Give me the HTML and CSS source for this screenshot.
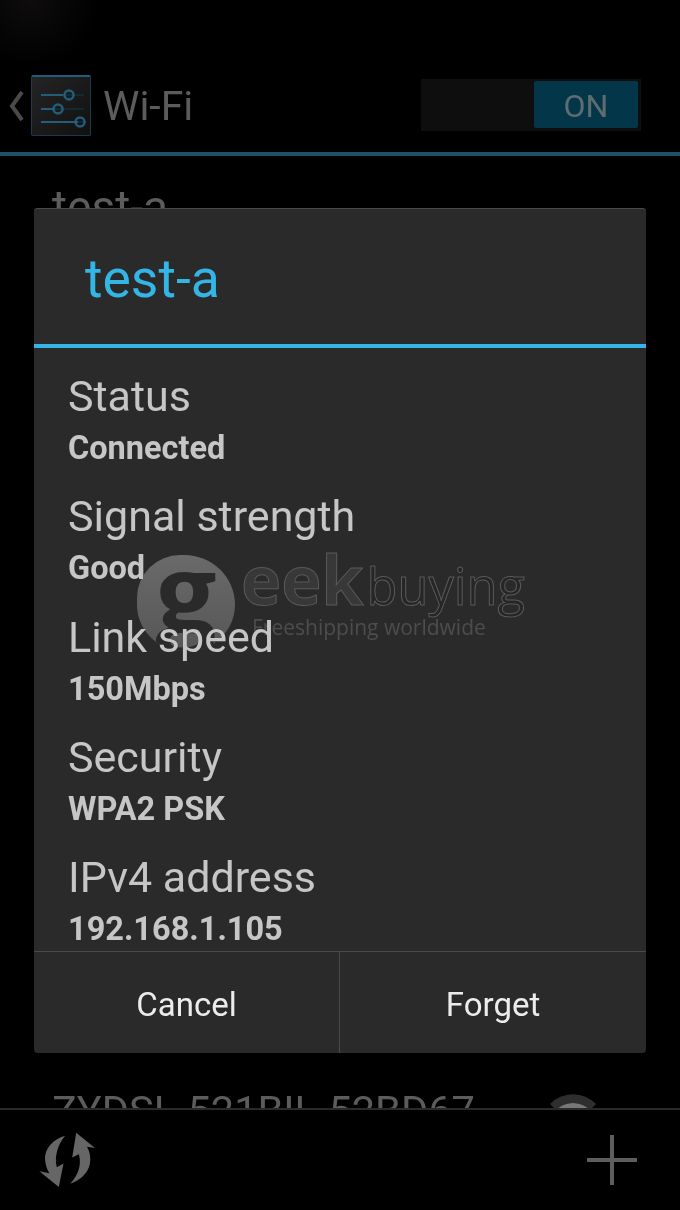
FILE: index.html
```html
<!DOCTYPE html>
<html lang="en">
  <head>
    <meta charset="UTF-8" />
    <meta name="viewport" content="width=device-width, initial-scale=1.0" />
    <title>Wi-Fi</title>
    <link rel="stylesheet" href="styles.css">
  </head>
  <body>
    <div class="screen">
      <div class="status-bar"></div>

      <div class="action-bar">
        <svg class="back-icon" viewBox="0 0 16 30" width="16" height="30">
          <path d="M14 1 L4 15 L14 29" fill="none" stroke="#4a4a4a" stroke-width="4" />
        </svg>
        <div class="settings-icon">
          <svg viewBox="0 0 58 58" width="58" height="58">
            <g fill="none" stroke="#235d7a">
              <path d="M9 18 H52 M9 32 H52 M9 45 H52" stroke="#12303f" stroke-width="1.5" />
              <path d="M9 18 H31 M9 32 H23 M9 45 H46" stroke-width="2" />
              <circle cx="37" cy="18" r="4.5" stroke-width="2.5" />
              <circle cx="26" cy="32" r="4.5" stroke-width="2.5" />
              <circle cx="48" cy="45" r="4.5" stroke-width="2.5" />
            </g>
          </svg>
        </div>
        <span class="action-title">Wi-Fi</span>
        <div class="switch">
          <div class="switch-thumb">ON</div>
        </div>
      </div>

      <div class="network-list">
        <div class="network-row">test-a</div>
        <div class="network-row last">
          <span>ZYDSL-521BIL-52BD67</span>
          <svg class="wifi-icon" viewBox="0 0 50 30" width="50" height="30">
            <path d="M2 14 A32 32 0 0 1 48 14 L42 20 A24 24 0 0 0 8 20 Z" fill="#2e2e2e" />
            <path d="M8 20 A24 24 0 0 1 42 20 L25 40 Z" fill="#777" />
          </svg>
        </div>
      </div>

      <div class="bottom-bar">
        <svg class="refresh-icon" viewBox="110 265 185 185" width="62" height="62">
          <path d="M197 285 C160 295 135 325 137 355 C138 372 143 385 150 397 L120 391 L178 438 L192 368 L172 379 C165 350 172 315 197 285 Z" fill="#666" />
          <path d="M212 428 C248 415 272 390 272 355 C272 340 268 328 262 318 L286 322 L230 276 L218 350 L238 340 C246 370 238 400 212 428 Z" fill="#666" />
        </svg>
        <svg class="add-icon" viewBox="0 0 50 50" width="50" height="50">
          <path d="M25 0 V50 M0 25 H50" stroke="#5e5e5e" stroke-width="4" />
        </svg>
      </div>

      <div class="dialog">
        <div class="dialog-title">test-a</div>
        <div class="dialog-body">
          <div class="info-row">
            <div class="info-label">Status</div>
            <div class="info-value">Connected</div>
          </div>
          <div class="info-row">
            <div class="info-label">Signal strength</div>
            <div class="info-value">Good</div>
          </div>
          <div class="info-row">
            <div class="info-label">Link speed</div>
            <div class="info-value">150Mbps</div>
          </div>
          <div class="info-row">
            <div class="info-label">Security</div>
            <div class="info-value">WPA2 PSK</div>
          </div>
          <div class="info-row">
            <div class="info-label">IPv4 address</div>
            <div class="info-value">192.168.1.105</div>
          </div>
        </div>
        <div class="dialog-buttons">
          <div class="dialog-button">Cancel</div>
          <div class="dialog-button">Forget</div>
        </div>
      </div>

      <div class="watermark">
        <div class="wm-badge"><span>g</span></div>
        <div class="wm-name"><b>eek</b><span>buying</span></div>
        <div class="wm-tagline">Freeshipping worldwide</div>
      </div>
    </div>
  </body>
</html>
```

FILE: styles.css
```css
body {
    margin: 0;
    background: #000;
    font-family: Roboto, sans-serif;
}

.screen {
    position: relative;
    display: flex;
    flex-direction: column;
    width: 680px;
    height: 1210px;
    overflow: hidden;
    background: #000;
}

.status-bar {
    height: 60px;
    flex-shrink: 0;
    background: radial-gradient(circle at 30px 0, #0e0c0c, #000 70px);
}

/* action bar */
.action-bar {
    display: flex;
    align-items: center;
    height: 92px;
    flex-shrink: 0;
    padding-left: 8px;
    padding-right: 39px;
    border-bottom: 4px solid #1b5168;
}

.back-icon {
    margin-right: 7px;
}

.settings-icon {
    width: 58px;
    height: 58px;
    border: 1px solid #173c4e;
    border-top: 2px solid #1f5d7a;
    border-radius: 2px;
    background: linear-gradient(135deg, #242424, #111);
    margin-top: -2px;
}

.action-title {
    margin-left: 12px;
    font-size: 41px;
    color: #5c5c5c;
    flex: 1;
}

.switch {
    display: flex;
    justify-content: flex-end;
    width: 217px;
    height: 47px;
    padding: 2px 3px 3px 0;
    background: #0e0e0e;
    margin-top: -2px;
}

.switch-thumb {
    width: 104px;
    background: #04364a;
    border-radius: 2px;
    color: #5f6c70;
    font-size: 32px;
    line-height: 50px;
    text-align: center;
}

/* list behind the dialog */
.network-list {
    flex: 1;
    display: flex;
    flex-direction: column;
    padding-left: 52px;
    overflow: hidden;
    font-size: 41.5px;
    color: #5c5c5c;
}

.network-row {
    margin-top: 24px;
    height: 60px;
}

.network-row:first-child {
    font-size: 46px;
}

.network-row.last {
    position: relative;
    margin-top: auto;
    margin-bottom: -38px;
}

.wifi-icon {
    position: absolute;
    left: 496px;
    top: 4px;
}

.bottom-bar {
    display: flex;
    align-items: center;
    justify-content: space-between;
    height: 100px;
    flex-shrink: 0;
    padding: 0 43px 0 36px;
    border-top: 2px solid #2a2a2a;
}

/* dialog */
.dialog {
    position: absolute;
    left: 34px;
    top: 208px;
    width: 612px;
    height: 845px;
    display: flex;
    flex-direction: column;
    background: #2a2a2a;
    border-radius: 4px;
    box-shadow: inset 0 1px 0 #4a4a4a;
}

.dialog-title {
    height: 136px;
    line-height: 142px;
    padding-left: 51px;
    font-size: 53.5px;
    color: #33b5e5;
    border-bottom: 4px solid #33b5e5;
    flex-shrink: 0;
}

.dialog-body {
    flex: 1;
    padding: 23px 0 0 34px;
    overflow: hidden;
}

.info-row {
    height: 120.3px;
}

.info-label {
    font-size: 43px;
    line-height: 50px;
    color: #c6c6c6;
}

.info-value {
    font-size: 32.5px;
    line-height: 55px;
    font-weight: 700;
    color: #c6c6c6;
}

.dialog-buttons {
    display: grid;
    grid-template-columns: 305px 1fr;
    height: 101px;
    flex-shrink: 0;
    border-top: 1px solid #4a4a4a;
}

.dialog-button {
    display: flex;
    align-items: center;
    justify-content: center;
    font-size: 33px;
    color: #ececec;
    padding-top: 3px;
}

.dialog-button + .dialog-button {
    border-left: 1px solid #4a4a4a;
}

/* watermark on top of everything */
.watermark {
    position: absolute;
    left: 137px;
    top: 545px;
    width: 400px;
    height: 110px;
    font-family: "Open Sans", sans-serif;
}

.wm-badge {
    position: absolute;
    left: 0;
    top: 10px;
    width: 98px;
    height: 96px;
    border-radius: 46% 54% 50% 50%;
    background: linear-gradient(#6a6a6a, #565656);
    overflow: hidden;
    mix-blend-mode: lighten;
}

.wm-badge span {
    display: block;
    text-align: center;
    font-size: 108px;
    line-height: 72px;
    font-weight: 700;
    color: #2a2a2a;
}

.wm-name {
    position: absolute;
    left: 104px;
    top: -12px;
    white-space: nowrap;
    line-height: 92px;
    color: #383838;
    -webkit-text-stroke: 1px #5a5a5a;
}

.wm-name b {
    font-size: 68px;
    font-weight: 700;
}

.wm-name span {
    font-size: 50.5px;
    font-weight: 400;
    margin-left: 3px;
    color: #262626;
}

.wm-tagline {
    position: absolute;
    left: 115px;
    top: 68px;
    font-size: 21px;
    color: #4d4d4d;
    white-space: nowrap;
    mix-blend-mode: lighten;
}
```
